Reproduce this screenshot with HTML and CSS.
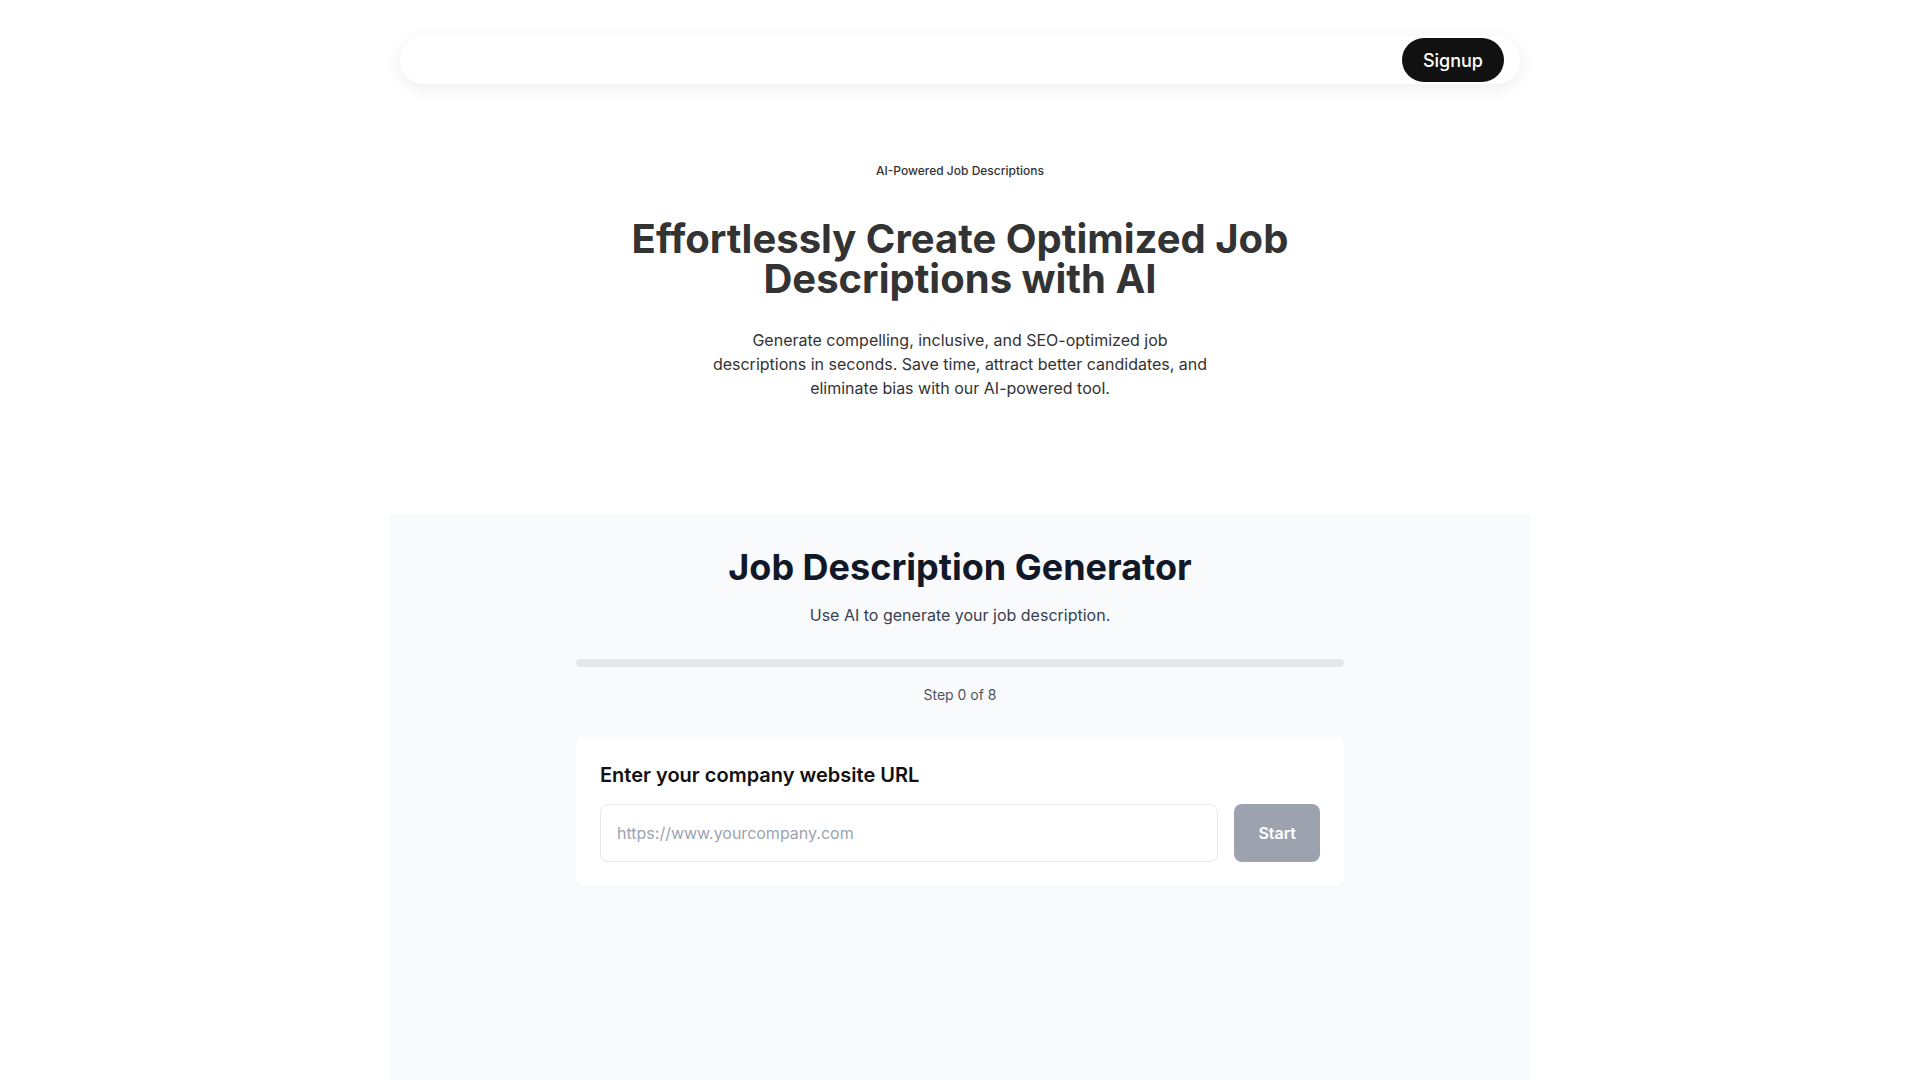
FILE: index.html
```html
<!DOCTYPE html>
<html lang="en">
<head>
<meta charset="UTF-8">
<title>AI Job Description Generator</title>
<meta name="viewport" content="width=device-width, initial-scale=1.0">
<link rel="stylesheet" href="styles.css">
</head>
<body>
<header class="site-header">
    <nav class="navbar">
        <a href="#signup" class="signup-btn">Signup</a>
    </nav>
</header>

<section class="hero">
    <p class="eyebrow">AI-Powered Job Descriptions</p>
    <h1>Effortlessly Create Optimized Job Descriptions with AI</h1>
    <p class="lead">Generate compelling, inclusive, and SEO-optimized job descriptions in seconds. Save time, attract better candidates, and eliminate bias with our AI-powered tool.</p>
</section>

<section class="generator">
    <h2 class="generator-title">Job Description Generator</h2>
    <p class="generator-sub">Use AI to generate your job description.</p>

    <div class="progress">
        <div class="progress-fill" style="width: 0%"></div>
    </div>
    <p class="step-label">Step 0 of 8</p>

    <form class="step-card" onsubmit="return false">
        <label class="step-title" for="company-url">Enter your company website URL</label>
        <div class="url-row">
            <input type="url" id="company-url" class="url-input" placeholder="https://www.yourcompany.com">
            <button type="submit" class="start-btn" disabled>Start</button>
        </div>
    </form>
</section>
</body>
</html>
```

FILE: styles.css
```css
body {
    font-family: Inter, "Noto Sans", Arial, sans-serif;
    background-color: #fff;
    color: #333;
    margin: 0;
    padding: 0;
}

/* top bar */
.site-header {
    padding-top: 36px;
    display: flex;
    justify-content: center;
}

.navbar {
    width: 1120px;
    height: 48px;
    box-sizing: border-box;
    padding: 2px 16px;
    display: flex;
    align-items: center;
    justify-content: flex-end;
    background-color: #fff;
    border-radius: 999px;
    box-shadow: 0 4px 18px rgba(0, 0, 0, 0.07);
}

.signup-btn {
    display: flex;
    align-items: center;
    height: 44px;
    padding: 0 21px;
    background-color: #111;
    color: #fff;
    font-size: 18px;
    font-weight: 500;
    text-decoration: none;
    border-radius: 999px;
}

/* hero */
.hero {
    text-align: center;
    padding-top: 79px;
    padding-bottom: 114px;
}

.eyebrow {
    margin: 0;
    font-size: 12px;
    line-height: 16px;
    font-weight: 500;
    color: #333;
}

.hero h1 {
    margin: 40px auto 0;
    max-width: 720px;
    font-size: 40px;
    line-height: 40px;
    font-weight: 700;
    color: #333;
}

.lead {
    margin: 29px auto 0;
    max-width: 512px;
    font-size: 16px;
    line-height: 24px;
    color: #333;
}

/* generator panel */
.generator {
    width: 1140px;
    min-height: 620px;
    margin: 0 auto;
    box-sizing: border-box;
    padding: 33px 0 60px;
    background-color: #f9fafb;
    display: flex;
    flex-direction: column;
    align-items: center;
}

.generator-title {
    margin: 0;
    font-size: 36px;
    line-height: 40px;
    font-weight: 700;
    color: #111827;
}

.generator-sub {
    margin: 16px 0 0;
    font-size: 16px;
    line-height: 24px;
    color: #374151;
}

.progress {
    width: 768px;
    height: 8px;
    margin-top: 32px;
    background-color: #e5e7eb;
    border-radius: 999px;
    overflow: hidden;
}

.progress-fill {
    height: 100%;
    background-color: #111827;
}

.step-label {
    margin: 18px 0 0;
    font-size: 14px;
    line-height: 20px;
    color: #4b5563;
}

.step-card {
    width: 768px;
    box-sizing: border-box;
    margin-top: 32px;
    padding: 24px;
    background-color: #fff;
    border-radius: 8px;
    box-shadow: 0 1px 2px rgba(0, 0, 0, 0.03);
}

.step-title {
    display: block;
    font-size: 20px;
    line-height: 28px;
    font-weight: 600;
    color: #111;
}

.url-row {
    display: flex;
    gap: 16px;
    margin-top: 15px;
}

.url-input {
    flex: 1;
    height: 58px;
    box-sizing: border-box;
    padding: 0 16px;
    font-family: inherit;
    font-size: 16px;
    color: #111;
    border: 1px solid #e5e7eb;
    border-radius: 8px;
    outline: none;
}

.url-input::placeholder {
    color: #9ca3af;
}

.start-btn {
    height: 58px;
    padding: 0 24px;
    font-family: inherit;
    font-size: 16px;
    font-weight: 600;
    color: #fff;
    background-color: #9ca3af;
    border: none;
    border-radius: 8px;
}
```
